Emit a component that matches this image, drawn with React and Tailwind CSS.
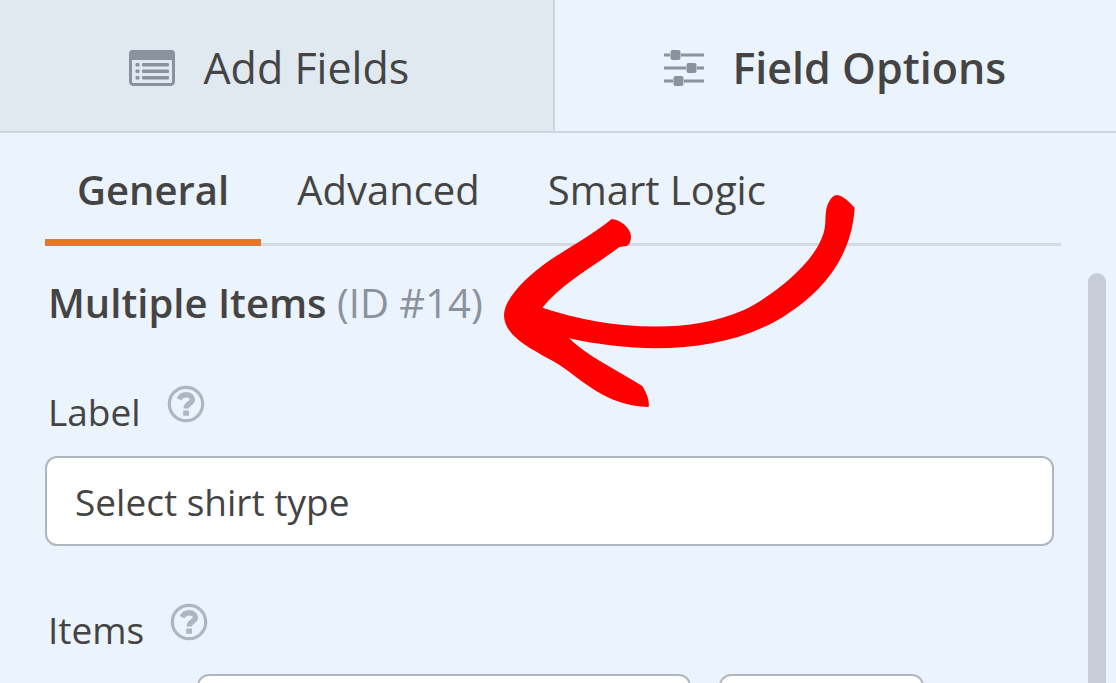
import React, { useState } from 'react';

const sections = ['General', 'Advanced', 'Smart Logic'];

const FormIcon = () => (
  <svg className="w-[46px] h-9" viewBox="0 0 46 36" fill="none" aria-hidden="true">
    <rect x="1.5" y="1.5" width="43" height="33" rx="3" stroke="#8c919e" strokeWidth="3" />
    <path d="M0 10V4a4 4 0 0 1 4-4h38a4 4 0 0 1 4 4v6z" fill="#8c919e" />
    <g fill="#8c919e">
      <rect x="6.5" y="13" width="4" height="3.4" rx="1" />
      <rect x="13" y="13" width="27" height="3.4" rx="1" />
      <rect x="6.5" y="19.500" width="4" height="3.4" rx="1" />
      <rect x="13" y="19.500" width="27" height="3.4" rx="1" />
      <rect x="6.5" y="26" width="4" height="3.4" rx="1" />
      <rect x="13" y="26" width="27" height="3.4" rx="1" />
    </g>
  </svg>
);

const SlidersIcon = () => (
  <svg className="w-10 h-9" viewBox="0 0 40 36" fill="#8c919e" aria-hidden="true">
    <path d="M0 3.5h6v3H0zM17 3.5h23v3H17zM0 16.5h22v3H0zM33 16.5h7v3h-7zM0 29.5h9v3H0zM20 29.5h20v3H20z" />
    <rect x="6.5" y="0" width="10" height="10" rx="2" />
    <rect x="22.5" y="13" width="10" height="10" rx="2" />
    <rect x="9.5" y="26" width="10" height="10" rx="2" />
  </svg>
);

const HelpIcon = () => (
  <svg className="size-[38px]" viewBox="0 0 38 38" fill="none" aria-hidden="true">
    <circle cx="19" cy="19" r="16.7" stroke="#b0b6bf" strokeWidth="3.2" />
    <path
      d="M12.2 14.200C13.500 11 16 9.800 19.300 9.800c3.500 0 6.100 1.900 6.100 4.700 0 4.200-6.200 3.700-6.200 8.900"
      stroke="#b0b6bf"
      strokeWidth="5.4"
    />
    <rect x="16.2" y="25.400" width="5.8" height="5.4" rx="0.6" fill="#b0b6bf" />
  </svg>
);

const ArrowMark = () => (
  <svg
    className="absolute left-[490px] top-[185px] w-[380px] h-[235px] pointer-events-none"
    viewBox="0 0 1140 705"
    fill="#ff0000"
    aria-hidden="true"
  >
    <path d="M365 102C395 105 424 133 423 156Q422 178 410 183L388 186C320 238 215 295 157 368C340 428 580 455 762 375C870 320 985 220 1003 135C1009 110 1003 82 1014 56Q1026 30 1041 30C1058 31 1078 51 1094 68C1085 215 1000 320 880 395C700 505 455 508 237 460C295 515 370 549 457 603Q480 640 476 666C350 665 270 580 205 538C140 498 42 460 42 390C43 340 110 275 175 229C240 185 305 151 365 102Z" />
  </svg>
);

const FieldLabel = ({ htmlFor, children }) => (
  <div className="flex items-start gap-[26px] pl-[3px]">
    <label htmlFor={htmlFor} className="text-[37px] leading-[54px]">{children}</label>
    <button type="button" aria-label={`Help: ${children}`}>
      <HelpIcon />
    </button>
  </div>
);

const App = () => {
  const [panel, setPanel] = useState('options');
  const [section, setSection] = useState('General');
  const [label, setLabel] = useState('Select shirt type');

  const panelClass = (name) =>
    panel === name ? 'bg-[#ebf3fc] font-semibold' : 'bg-[#e0e8f0]';

  return (
    <div className="relative flex flex-col h-screen overflow-hidden bg-[#ebf3fc] text-[#444] font-['Open_Sans','Noto_Sans',sans-serif]">
      <div className="flex shrink-0 border-b-2 border-[#ced6e0] text-[43px] leading-[60px]">
        <button
          type="button"
          onClick={() => setPanel('fields')}
          className={`w-[49.7%] flex items-center justify-center gap-7 pt-[38px] pb-[33px] pr-[14px] border-r-2 border-[#ced6e0] ${panelClass('fields')}`}
        >
          <FormIcon />
          Add Fields
        </button>
        <button
          type="button"
          onClick={() => setPanel('options')}
          className={`flex-1 flex items-center justify-center gap-7 pt-[38px] pb-[33px] ${panelClass('options')}`}
        >
          <SlidersIcon />
          Field Options
        </button>
      </div>

      <div className="flex flex-1 min-h-0">
        <div className="flex-1 min-w-0 pl-[45px]">
          <div className="flex gap-1 mr-[27px] border-b-3 border-[#d3dae4] text-[40px] leading-[56px]">
            {sections.map((name) => (
              <button
                key={name}
                type="button"
                onClick={() => setSection(name)}
                className={`px-8 pt-[29px] pb-[21px] -mb-[3px] border-b-7 ${
                  section === name ? 'border-[#e27730] font-semibold' : 'border-transparent'
                }`}
              >
                {name}
              </button>
            ))}
          </div>

          <h2 className="mt-[29px] pl-[3px] text-[40px] leading-[56px] font-semibold">
            Multiple Items <span className="font-normal text-[#8c919e]">(ID #14)</span>
          </h2>

          <div className="mt-[54px] mr-[34px]">
            <FieldLabel htmlFor="field-label">Label</FieldLabel>
            <input
              id="field-label"
              type="text"
              value={label}
              onChange={(e) => setLabel(e.target.value)}
              className="block w-full h-[90px] mt-[17px] px-7 bg-white border-2 border-[#b0b6bf] rounded-xl text-[37px]"
            />
          </div>

          <div className="mt-[57px] mr-[34px]">
            <FieldLabel htmlFor="item-label">Items</FieldLabel>
            <div className="flex gap-7 mt-[17px] pl-[152px]">
              <input id="item-label" type="text" className="w-[494px] h-[90px] px-7 bg-white border-2 border-[#b0b6bf] rounded-xl text-[37px]" />
              <input aria-label="Item price" type="text" className="w-[205px] h-[90px] px-7 bg-white border-2 border-[#b0b6bf] rounded-xl text-[37px]" />
            </div>
          </div>
        </div>

        {/* scroll track */}
        <div className="w-7 flex pt-[140px] pr-[10px]">
          <div className="flex-1 rounded-t-full bg-[#c6cdd6]" />
        </div>
      </div>

      <ArrowMark />
    </div>
  );
};

export default App;
